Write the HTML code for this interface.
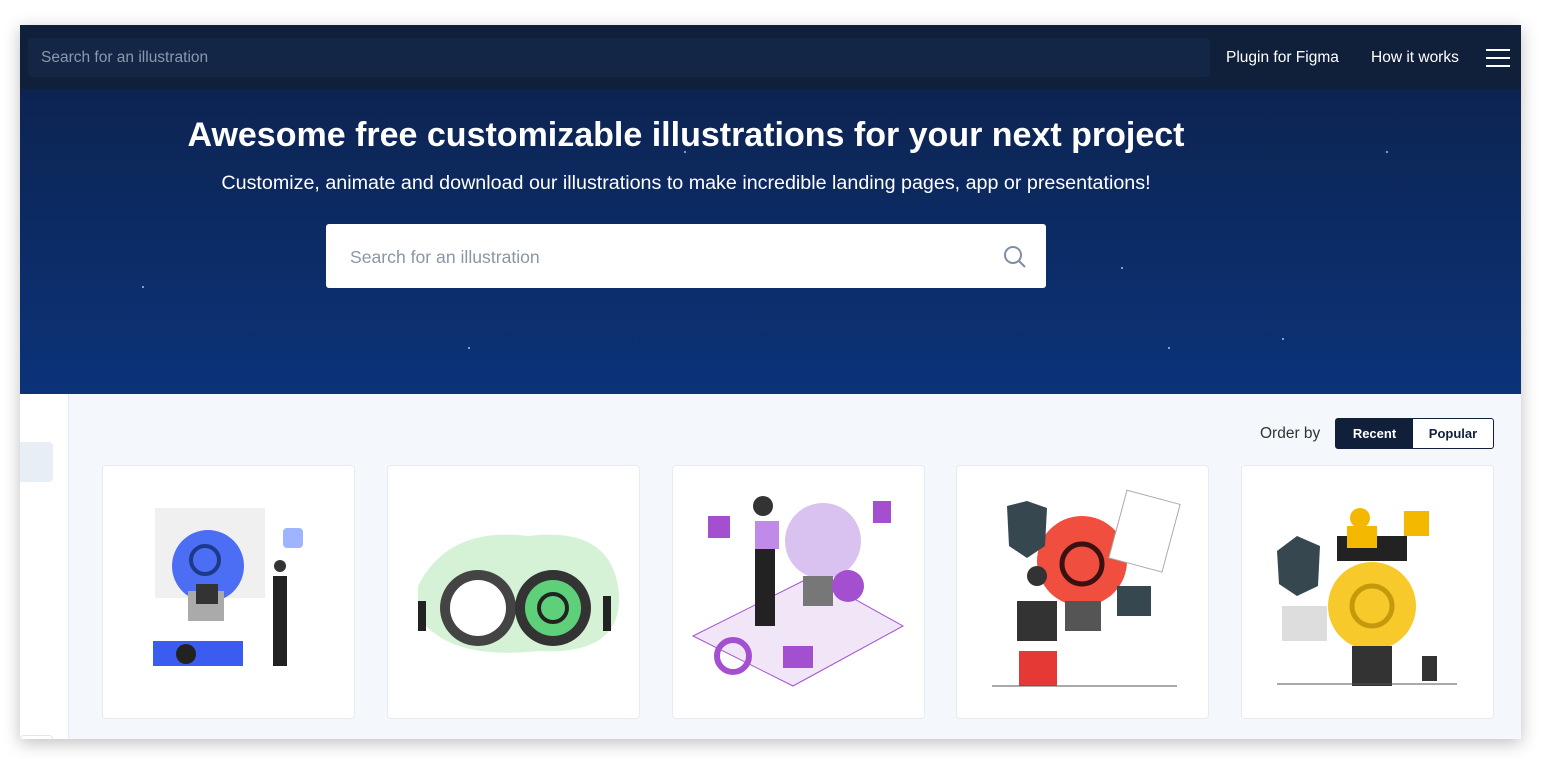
<!DOCTYPE html>
<html><head><meta charset="utf-8"><style>
*{margin:0;padding:0;box-sizing:border-box}
body{width:1541px;height:759px;background:#fff;font-family:"Liberation Sans",sans-serif;position:relative;overflow:hidden}
.win{position:absolute;left:20px;top:25px;width:1501px;height:714px;overflow:hidden;box-shadow:0 4px 16px rgba(0,0,0,.25);background:#f4f7fb}
.nav{position:absolute;left:0;top:0;width:1501px;height:64px;background:#10203a}
.nsearch{position:absolute;left:8px;top:13px;width:1182px;height:39px;background:#132646;border-radius:4px;color:#8a98ad;font-size:15.5px;line-height:39px;padding-left:13px}
.nl{position:absolute;top:24px;color:#fff;font-size:15.5px}
.hero{position:absolute;left:0;top:64px;width:1501px;height:305px;background:linear-gradient(#0d2452,#0b3379)}
h1{position:absolute;left:0;width:1332px;text-align:center;top:27px;color:#fff;font-size:34px;font-weight:bold}
.sub{position:absolute;left:0;width:1332px;text-align:center;top:83px;color:#fff;font-size:19.7px}
.bs{position:absolute;left:306px;top:135px;width:720px;height:64px;background:#fff;border-radius:3px;color:#8a96a6;font-size:17.6px;line-height:66px;padding-left:24px}
.side{position:absolute;left:0;top:369px;width:49px;height:345px;background:#fff;border-right:1px solid #e6ebf2}
.card{position:absolute;top:440px;width:253px;height:254px;background:#fff;border:1px solid #e6ebf2;border-radius:4px;overflow:hidden}
.star{position:absolute;width:2px;height:2px;background:#9fc0ff;border-radius:50%}
</style></head><body>
<div class="win">
<div class="nav"><div class="nsearch">Search for an illustration</div>
<div class="nl" style="left:1206px">Plugin for Figma</div><div class="nl" style="left:1351px">How it works</div>
<div style="position:absolute;left:1466px;top:24px;width:24px;height:2px;background:#fff;box-shadow:0 8px 0 #fff,0 16px 0 #fff"></div></div>
<div class="hero">
<div class="star" style="left:1366px;top:62px"></div><div class="star" style="left:1101px;top:178px"></div><div class="star" style="left:122px;top:197px"></div><div class="star" style="left:448px;top:258px"></div><div class="star" style="left:1148px;top:258px"></div><div class="star" style="left:664px;top:62px"></div><div class="star" style="left:1262px;top:249px"></div>
<h1>Awesome free customizable illustrations for your next project</h1>
<div class="sub">Customize, animate and download our illustrations to make incredible landing pages, app or presentations!</div>
<div class="bs">Search for an illustration
<svg style="position:absolute;right:18px;top:20px" width="26" height="26" viewBox="0 0 26 26" fill="none" stroke="#7f8da3" stroke-width="2"><circle cx="11" cy="11" r="8"/><path d="M17 17l6 6"/></svg></div>
</div>
<div class="side"><div style="position:absolute;left:0;top:48px;width:33px;height:40px;background:#e8eef5;border-radius:0 4px 4px 0"></div><div style="position:absolute;left:0;top:341px;width:33px;height:10px;border:1px solid #e0e6ee;border-radius:4px"></div></div>
<div style="position:absolute;left:1240px;top:400px;font-size:15.5px;color:#333">Order by</div>
<div style="position:absolute;left:1315px;top:393px;width:159px;height:31px;border:1px solid #10203a;border-radius:3px;background:#fff;font-size:13px;font-weight:bold">
<div style="position:absolute;left:0;top:0;width:77px;height:29px;background:#10203a;color:#fff;text-align:center;line-height:29px">Recent</div>
<div style="position:absolute;left:77px;top:0;width:80px;height:29px;color:#10203a;text-align:center;line-height:29px">Popular</div></div>

<div class="card" style="left:82px"><svg width="253" height="254">
<rect x="52" y="42" width="110" height="90" fill="#f0f0f0"/><circle cx="105" cy="100" r="36" fill="#4c6ef5"/><circle cx="102" cy="94" r="14" fill="none" stroke="#1d3a8a" stroke-width="4"/><rect x="85" y="125" width="36" height="30" fill="#aaa"/><rect x="93" y="118" width="22" height="20" fill="#333"/>
<rect x="180" y="62" width="20" height="20" rx="4" fill="#9fb4ff"/><rect x="170" y="110" width="14" height="90" fill="#222"/><circle cx="177" cy="100" r="6" fill="#333"/>
<rect x="50" y="175" width="90" height="25" fill="#3a5cf0"/><circle cx="83" cy="188" r="10" fill="#222"/></svg></div>
<div class="card" style="left:367px"><svg width="253" height="254">
<path d="M30 120 Q60 60 140 70 Q220 60 230 120 Q240 190 150 185 Q60 195 30 150Z" fill="#d6f2d6"/><circle cx="90" cy="142" r="38" fill="#444"/><circle cx="90" cy="142" r="28" fill="#fff"/><circle cx="165" cy="142" r="38" fill="#333"/><circle cx="165" cy="142" r="28" fill="#5fd07a"/><circle cx="165" cy="142" r="14" fill="none" stroke="#222" stroke-width="4"/><rect x="30" y="135" width="8" height="30" fill="#222"/><rect x="215" y="130" width="8" height="35" fill="#222"/></svg></div>
<div class="card" style="left:652px"><svg width="253" height="254">
<path d="M20 170 L140 110 L230 160 L120 220Z" fill="#f0e6f8" stroke="#a44fd0"/><circle cx="150" cy="75" r="38" fill="#d9c2f0"/><rect x="130" y="110" width="30" height="30" fill="#777"/><circle cx="175" cy="120" r="16" fill="#a44fd0"/><circle cx="60" cy="190" r="16" fill="none" stroke="#a44fd0" stroke-width="6"/><rect x="35" y="50" width="22" height="22" fill="#a44fd0"/><rect x="200" y="35" width="18" height="22" fill="#a44fd0"/><rect x="82" y="60" width="20" height="100" fill="#222"/><circle cx="90" cy="40" r="10" fill="#333"/><rect x="82" y="55" width="24" height="28" fill="#c08ae8"/><rect x="110" y="180" width="30" height="22" fill="#a44fd0"/></svg></div>
<div class="card" style="left:936px"><svg width="253" height="254">
<circle cx="125" cy="95" r="45" fill="#f04e3e"/><circle cx="125" cy="98" r="20" fill="none" stroke="#3a1010" stroke-width="5"/><rect x="108" y="135" width="36" height="30" fill="#555"/><path d="M50 40 L70 35 L90 42 L88 80 L70 92 L52 80Z" fill="#37474f"/><rect x="160" y="30" width="55" height="70" fill="#fff" stroke="#aaa" transform="rotate(15 187 65)"/><rect x="160" y="120" width="34" height="30" fill="#37474f"/><rect x="60" y="135" width="40" height="40" fill="#333"/><circle cx="80" cy="110" r="10" fill="#333"/><rect x="62" y="185" width="38" height="35" fill="#e53935"/><path d="M35 220H220" stroke="#555"/></svg></div>
<div class="card" style="left:1221px"><svg width="253" height="254">
<circle cx="130" cy="140" r="44" fill="#f7c92b"/><circle cx="130" cy="140" r="20" fill="none" stroke="#c49a0c" stroke-width="5"/><rect x="110" y="180" width="40" height="40" fill="#333"/><path d="M35 85 L55 70 L78 80 L76 120 L55 130 L37 118Z" fill="#37474f"/><rect x="95" y="70" width="70" height="25" fill="#222"/><circle cx="118" cy="52" r="10" fill="#f5b800"/><rect x="105" y="60" width="30" height="22" fill="#f5b800"/><rect x="162" y="45" width="25" height="25" fill="#f5b800"/><rect x="40" y="140" width="45" height="35" fill="#ddd"/><rect x="180" y="190" width="15" height="25" fill="#333"/><path d="M35 218H215" stroke="#555"/></svg></div>
</div>
</body></html>
